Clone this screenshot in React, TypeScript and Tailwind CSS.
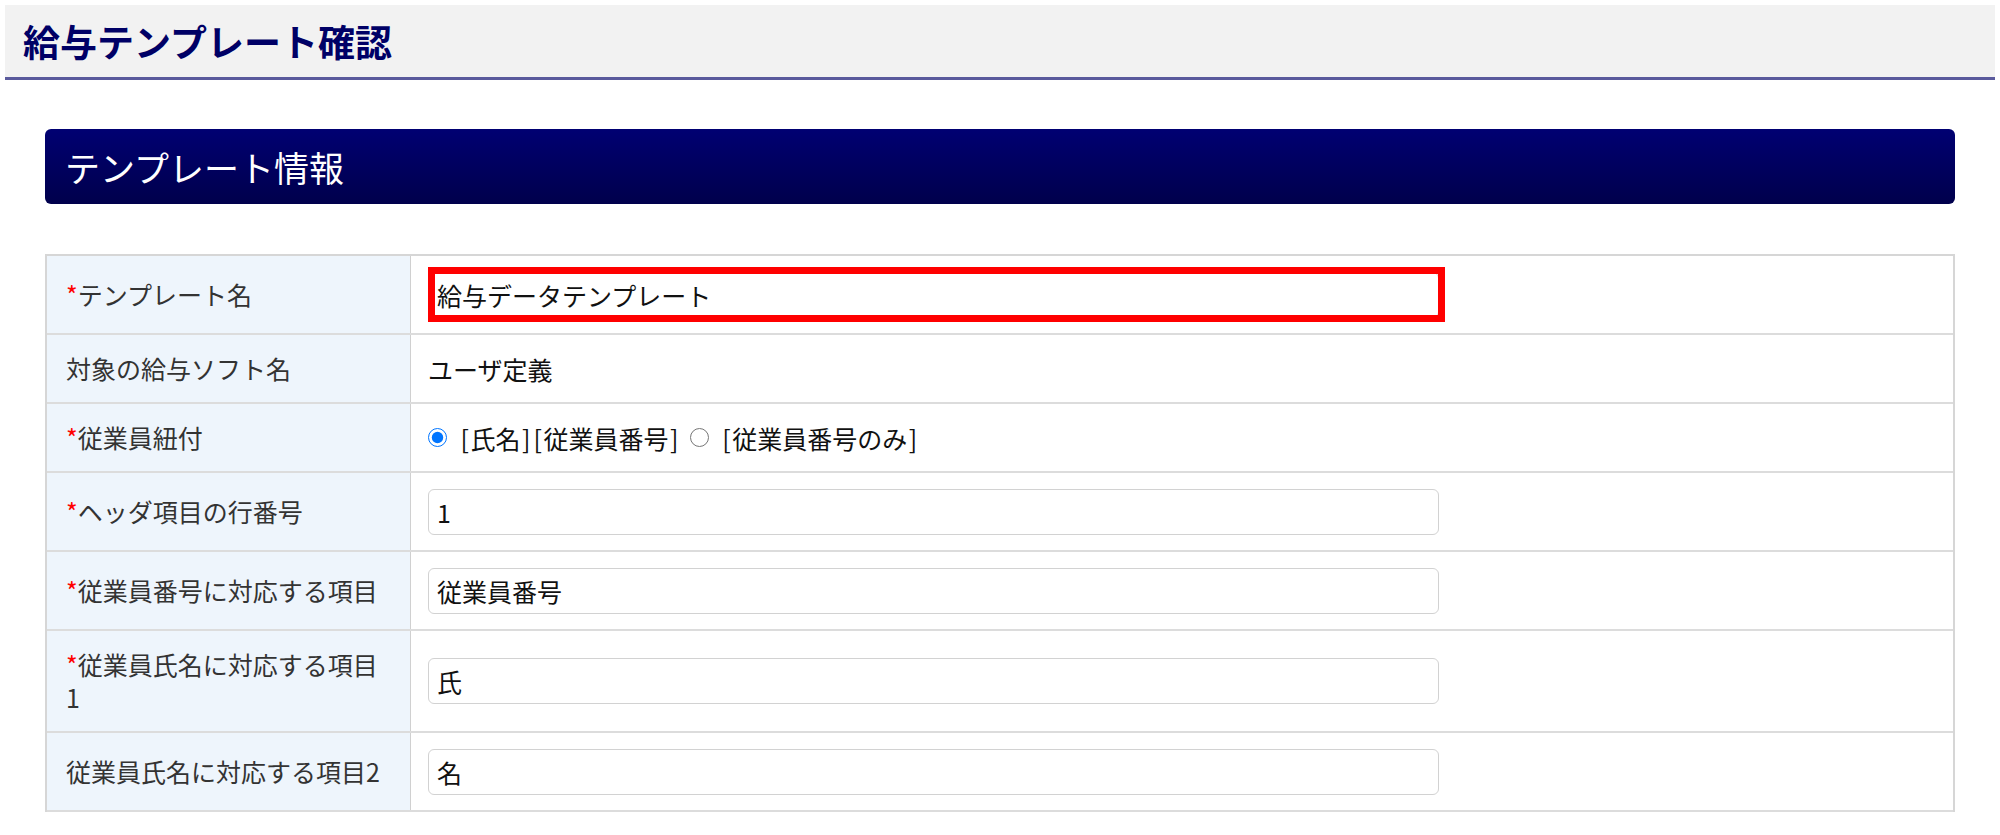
import React from "react";

const FONT = { fontFamily: '"Noto Sans CJK JP", "Noto Sans", sans-serif' };

function Req() {
  return <span className="text-[#ff0000]">*</span>;
}

function B({ c }: { c: string }) {
  return <span className="inline-block px-[1.5px]">{c}</span>;
}

function Field({ value, highlight }: { value: string; highlight?: boolean }) {
  return (
    <div className="relative w-[1011px] h-[46px] rounded-[6px] border-[1.5px] border-[#d2d2d2] bg-white flex items-center pl-[8px] text-[25px] text-[#111]">
      {value}
      {highlight && (
        <div className="absolute top-[-6px] bottom-[-5px] left-[-1.5px] right-[-7px] border-[7px] border-[#ff0000]" />
      )}
    </div>
  );
}

function Row({ label, children }: { label: React.ReactNode; children: React.ReactNode }) {
  return (
    <div className="flex border-b-2 border-[#dcdcdc]">
      <div className="w-[364px] shrink-0 bg-[#eef5fc] border-r border-[#d0d0d0] px-[19px] py-[17px] flex items-center text-[25px] leading-[33px] text-[#333333]">
        <div>{label}</div>
      </div>
      <div className="flex-1 pl-[17px] pr-[17px] py-[15.5px] flex items-center text-[25px] leading-[34px] text-[#111111]">
        {children}
      </div>
    </div>
  );
}

export default function App() {
  return (
    <div className="min-h-screen bg-white pt-[5px]" style={FONT}>
      <div className="mx-[5px] h-[75px] bg-[#f2f2f2] border-b-[3px] border-[#5a5a9c] flex items-center pl-[18px]">
        <h1 className="text-[37px] font-bold leading-none text-[#000066]">給与テンプレート確認</h1>
      </div>

      <div className="mx-[45px] mt-[49px]">
        <div className="h-[75px] rounded-[6px] bg-linear-to-b from-[#000072] to-[#00004c] flex items-center pl-[20px] text-white text-[35px] leading-none">
          テンプレート情報
        </div>

        <div className="mt-[50px] border-t-2 border-x-2 border-[#d6d6d6]">
          <Row label={<><Req />テンプレート名</>}>
            <Field value="給与データテンプレート" highlight />
          </Row>
          <Row label="対象の給与ソフト名">
            <span>ユーザ定義</span>
          </Row>
          <Row label={<><Req />従業員紐付</>}>
            <div className="flex items-center">
              <input type="radio" name="link" defaultChecked className="w-[19px] h-[19px] m-0 accent-[#0075ff]" />
              <span className="ml-[12px]">
                <B c="[" />氏名<B c="]" /><B c="[" />従業員番号<B c="]" />
              </span>
              <input type="radio" name="link" className="w-[19px] h-[19px] m-0 ml-[10px] accent-[#0075ff]" />
              <span className="ml-[12px]">
                <B c="[" />従業員番号のみ<B c="]" />
              </span>
            </div>
          </Row>
          <Row label={<><Req />ヘッダ項目の行番号</>}>
            <Field value="1" />
          </Row>
          <Row label={<><Req />従業員番号に対応する項目</>}>
            <Field value="従業員番号" />
          </Row>
          <Row label={<><Req />従業員氏名に対応する項目<br />1</>}>
            <Field value="氏" />
          </Row>
          <Row label="従業員氏名に対応する項目2">
            <Field value="名" />
          </Row>
        </div>
      </div>
    </div>
  );
}
